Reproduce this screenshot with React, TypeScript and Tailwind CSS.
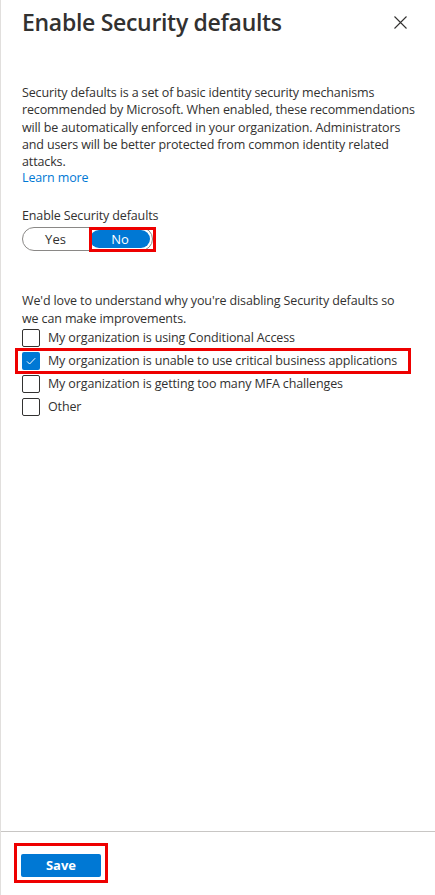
import React from 'react';

const reasons = [
  { label: 'My organization is using Conditional Access', checked: false },
  { label: 'My organization is unable to use critical business applications', checked: true },
  { label: 'My organization is getting too many MFA challenges', checked: false },
  { label: 'Other', checked: false },
];

function Checkbox({ checked }: { checked: boolean }) {
  return checked ? (
    <span className="flex h-[18px] w-[18px] shrink-0 items-center justify-center rounded-[2px] bg-[#0078d4]">
      <svg width="12" height="12" viewBox="0 0 12 12" fill="none">
        <path d="M2 6.4 4.6 9 10.2 3.2" stroke="white" strokeWidth="1" />
      </svg>
    </span>
  ) : (
    <span className="h-[18px] w-[18px] shrink-0 rounded-[2px] border border-[#323130] bg-white" />
  );
}

export default function App() {
  const [enabled, setEnabled] = React.useState(false);
  const [checks, setChecks] = React.useState(reasons.map(r => r.checked));

  return (
    <div className="flex h-[895px] w-[435px] flex-col border-l border-[#e1dfdd] bg-white font-['Open_Sans',sans-serif] text-[#323130]">
      <div className="flex-1 overflow-hidden pl-[21px] pr-[20px]">
        <div className="flex items-start justify-between pt-[5px]">
          <h1 className="text-[23px] font-semibold leading-[34px] tracking-[-0.3px]">Enable Security defaults</h1>
          <button className="mr-[8px] mt-[10px] flex h-[14px] w-[14px] items-center justify-center" aria-label="Close">
            <svg width="13" height="13" viewBox="0 0 13 13">
              <path d="M0.5 0.5 12.5 12.5 M12.5 0.5 0.5 12.5" stroke="#323130" strokeWidth="1.1" />
            </svg>
          </button>
        </div>

        <p className="mt-[45px] text-[12.5px] leading-[17.3px] tracking-[-0.13px]">
          Security defaults is a set of basic identity security mechanisms recommended by Microsoft. When enabled, these recommendations will be automatically enforced in your organization. Administrators and users will be better protected from common identity related attacks.
        </p>
        <a href="#" className="block text-[12.5px] leading-[15px] tracking-[-0.13px] text-[#0078d4]">Learn more</a>

        <div className="mt-[22px] text-[12.5px] leading-[17px] tracking-[-0.13px]">Enable Security defaults</div>
        <div className="relative mt-[3px] flex h-[24px] w-[131px] rounded-full border border-[#8a8886] text-[13px]">
          <button onClick={() => setEnabled(true)} className={`flex flex-1 items-center justify-center rounded-full ${enabled ? 'm-[2px] bg-[#0078d4] text-white' : ''}`}>Yes</button>
          <button onClick={() => setEnabled(false)} className={`flex w-[60px] items-center justify-center rounded-full ${!enabled ? 'm-[2px] bg-[#0078d4] text-white' : ''}`}>No</button>
          <div className="pointer-events-none absolute left-[66px] top-[-1px] h-[25px] w-[67px] border-[3px] border-[#ee0000]" />
        </div>

        <p className="mt-[41px] pr-[10px] text-[12.5px] leading-[17.3px] tracking-[-0.13px]">
          We'd love to understand why you're disabling Security defaults so we can make improvements.
        </p>
        <div className="mt-[2px] flex flex-col gap-[5px]">
          {reasons.map((r, i) => (
            <label
              key={r.label}
              className="relative flex h-[18px] cursor-pointer items-center gap-[8px] text-[12.5px] tracking-[-0.13px]"
              onClick={() => setChecks(c => c.map((v, j) => (j === i ? !v : v)))}
            >
              <Checkbox checked={checks[i]} />
              <span>{r.label}</span>
              {i === 1 && (
                <span className="pointer-events-none absolute left-[-7px] top-[-4px] h-[26px] w-[396px] border-[3px] border-[#ee0000]" />
              )}
            </label>
          ))}
        </div>
      </div>

      <div className="h-[64px] shrink-0 border-t border-[#c8c6c4] pl-[20px] pt-[20px]">
        <div className="relative w-fit">
          <button className="h-[23px] w-[80px] rounded-[2px] bg-[#0078d4] text-[13px] font-bold text-white">Save</button>
          <div className="pointer-events-none absolute left-[-7px] top-[-9px] h-[40px] w-[94px] border-[3px] border-[#ee0000]" />
        </div>
      </div>
    </div>
  );
}
